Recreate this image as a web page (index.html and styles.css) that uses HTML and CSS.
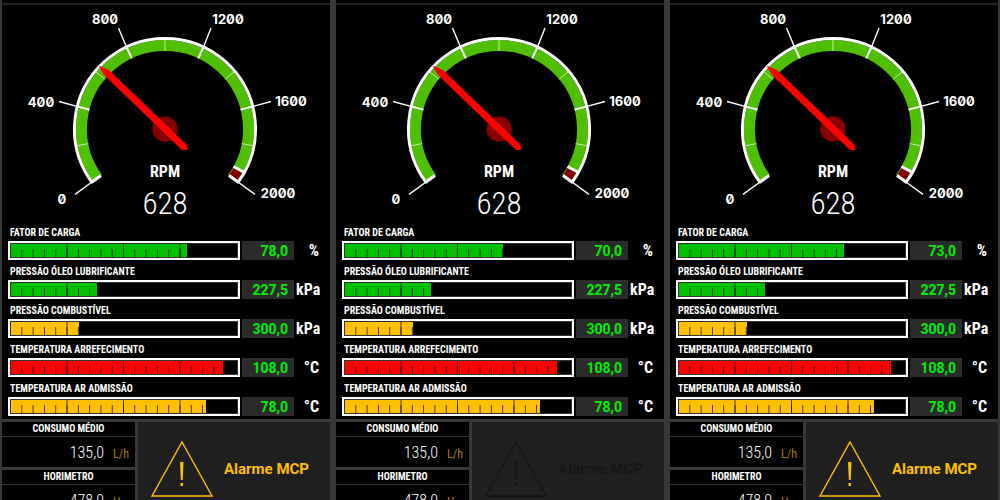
FILE: index.html
```html
<!DOCTYPE html>
<html lang="pt-BR">
<head>
<meta charset="utf-8">
<title>Motores</title>
<link rel="stylesheet" href="styles.css">
</head>
<body>
<svg class="defs" aria-hidden="true">
  <symbol id="dial" viewBox="0 0 328 217">
    <g transform="translate(163 124)" fill="none">
      <path d="M-67.6 49.1A83.5 83.5 0 1 1 67.6 49.1" stroke="#4fbf00" stroke-width="11"/>
      <path d="M73.4 40.3A83.7 83.7 0 0 1 68.4 48.3" stroke="#850000" stroke-width="10"/>
      <path d="M-73.2 53.2A90.5 90.5 0 1 1 73.2 53.2" stroke="#fff" stroke-width="3"/>
      <path d="M-64 46.5L-74 53.8M64 46.5L74 53.8M68.5 37.5L79 43.2" stroke="#fff" stroke-width="3"/>
      <path d="M-75.5-19.4L-88-22.6M-33.2-70.6L-38.5-82M33.2-70.6L38.5-82M75.5-19.4L88-22.6" stroke="#fff" stroke-width="2"/>
      <path d="M-76.6 14.6L-88 16.8M-60.1-49.7L-69-57M0-78V-90M60.1-49.7L69-57M76.6 14.6L88 16.8" stroke="#fff" stroke-opacity=".65" stroke-width="1"/>
      <path d="M-73 53L-90 65.4M-88-22.6L-106-27.5M-38.5-82L-46.500-101M38.5-82L46-101M88-22.6L106-27.5M73 53L90 65.4" stroke="#fff" stroke-width="1.4"/>
      <circle r="12.7" fill="#850000"/>
      <path d="M-65.500-62.500L-56-58.500L21.500 16L22 20.500L17 20.500L-60.500-54Z" fill="#f00" stroke="#f00" stroke-linejoin="round"/>
    </g>
  </symbol>
  <symbol id="warning" viewBox="0 0 64 58">
    <path d="M32 2L62 56H2Z" fill="none" stroke="currentColor" stroke-width="1.400"/>
    <path d="M30 22H33.500L32.700 40H30.800ZM30.500 43H33V46H30.500Z" fill="currentColor"/>
  </symbol>
</svg>
<main class="engines">
  <section class="engine">
    <svg class="gauge" viewBox="0 0 328 217">
      <use href="#dial"/>
      <text class="scale" x="60" y="199" text-anchor="middle">0</text>
      <text class="scale" x="39" y="102" text-anchor="middle">400</text>
      <text class="scale" x="103" y="19" text-anchor="middle">800</text>
      <text class="scale" x="226" y="19" text-anchor="middle">1200</text>
      <text class="scale" x="289" y="101" text-anchor="middle">1600</text>
      <text class="scale" x="276" y="193" text-anchor="middle">2000</text>
      <text class="name" x="163" y="172" text-anchor="middle">RPM</text>
      <text class="speed" x="163" y="209" text-anchor="middle">628</text>
    </svg>
    <div class="readings">
      <div class="reading"><span class="label">FATOR DE CARGA</span><div class="bar green"><i class="fill" style="width:78%"></i></div><span class="value">78,0</span><span class="unit">%</span></div>
      <div class="reading"><span class="label">PRESSÃO ÓLEO LUBRIFICANTE</span><div class="bar green"><i class="fill" style="width:38%"></i></div><span class="value">227,5</span><span class="unit">kPa</span></div>
      <div class="reading"><span class="label">PRESSÃO COMBUSTÍVEL</span><div class="bar amber"><i class="fill" style="width:30%"></i></div><span class="value">300,0</span><span class="unit">kPa</span></div>
      <div class="reading"><span class="label">TEMPERATURA ARREFECIMENTO</span><div class="bar red"><i class="fill" style="width:94%"></i></div><span class="value">108,0</span><span class="unit">°C</span></div>
      <div class="reading"><span class="label">TEMPERATURA AR ADMISSÃO</span><div class="bar amber"><i class="fill" style="width:86.5%"></i></div><span class="value">78,0</span><span class="unit">°C</span></div>
    </div>
    <div class="footer">
      <div class="counters">
        <div class="counter"><h3>CONSUMO MÉDIO</h3><p><span>135,0</span><small>L/h</small></p></div>
        <div class="counter"><h3>HORIMETRO</h3><p><span>478,0</span><small>H</small></p></div>
      </div>
      <div class="alarm"><svg class="sign" viewBox="0 0 64 58"><use href="#warning"/></svg><span>Alarme MCP</span></div>
    </div>
  </section>
  <section class="engine">
    <svg class="gauge" viewBox="0 0 328 217">
      <use href="#dial"/>
      <text class="scale" x="60" y="199" text-anchor="middle">0</text>
      <text class="scale" x="39" y="102" text-anchor="middle">400</text>
      <text class="scale" x="103" y="19" text-anchor="middle">800</text>
      <text class="scale" x="226" y="19" text-anchor="middle">1200</text>
      <text class="scale" x="289" y="101" text-anchor="middle">1600</text>
      <text class="scale" x="276" y="193" text-anchor="middle">2000</text>
      <text class="name" x="163" y="172" text-anchor="middle">RPM</text>
      <text class="speed" x="163" y="209" text-anchor="middle">628</text>
    </svg>
    <div class="readings">
      <div class="reading"><span class="label">FATOR DE CARGA</span><div class="bar green"><i class="fill" style="width:70%"></i></div><span class="value">70,0</span><span class="unit">%</span></div>
      <div class="reading"><span class="label">PRESSÃO ÓLEO LUBRIFICANTE</span><div class="bar green"><i class="fill" style="width:38%"></i></div><span class="value">227,5</span><span class="unit">kPa</span></div>
      <div class="reading"><span class="label">PRESSÃO COMBUSTÍVEL</span><div class="bar amber"><i class="fill" style="width:30%"></i></div><span class="value">300,0</span><span class="unit">kPa</span></div>
      <div class="reading"><span class="label">TEMPERATURA ARREFECIMENTO</span><div class="bar red"><i class="fill" style="width:94%"></i></div><span class="value">108,0</span><span class="unit">°C</span></div>
      <div class="reading"><span class="label">TEMPERATURA AR ADMISSÃO</span><div class="bar amber"><i class="fill" style="width:86.5%"></i></div><span class="value">78,0</span><span class="unit">°C</span></div>
    </div>
    <div class="footer">
      <div class="counters">
        <div class="counter"><h3>CONSUMO MÉDIO</h3><p><span>135,0</span><small>L/h</small></p></div>
        <div class="counter"><h3>HORIMETRO</h3><p><span>478,0</span><small>H</small></p></div>
      </div>
      <div class="alarm off"><svg class="sign" viewBox="0 0 64 58"><use href="#warning"/></svg><span>Alarme MCP</span></div>
    </div>
  </section>
  <section class="engine">
    <svg class="gauge" viewBox="0 0 328 217">
      <use href="#dial"/>
      <text class="scale" x="60" y="199" text-anchor="middle">0</text>
      <text class="scale" x="39" y="102" text-anchor="middle">400</text>
      <text class="scale" x="103" y="19" text-anchor="middle">800</text>
      <text class="scale" x="226" y="19" text-anchor="middle">1200</text>
      <text class="scale" x="289" y="101" text-anchor="middle">1600</text>
      <text class="scale" x="276" y="193" text-anchor="middle">2000</text>
      <text class="name" x="163" y="172" text-anchor="middle">RPM</text>
      <text class="speed" x="163" y="209" text-anchor="middle">628</text>
    </svg>
    <div class="readings">
      <div class="reading"><span class="label">FATOR DE CARGA</span><div class="bar green"><i class="fill" style="width:73%"></i></div><span class="value">73,0</span><span class="unit">%</span></div>
      <div class="reading"><span class="label">PRESSÃO ÓLEO LUBRIFICANTE</span><div class="bar green"><i class="fill" style="width:38%"></i></div><span class="value">227,5</span><span class="unit">kPa</span></div>
      <div class="reading"><span class="label">PRESSÃO COMBUSTÍVEL</span><div class="bar amber"><i class="fill" style="width:30%"></i></div><span class="value">300,0</span><span class="unit">kPa</span></div>
      <div class="reading"><span class="label">TEMPERATURA ARREFECIMENTO</span><div class="bar red"><i class="fill" style="width:94%"></i></div><span class="value">108,0</span><span class="unit">°C</span></div>
      <div class="reading"><span class="label">TEMPERATURA AR ADMISSÃO</span><div class="bar amber"><i class="fill" style="width:86.5%"></i></div><span class="value">78,0</span><span class="unit">°C</span></div>
    </div>
    <div class="footer">
      <div class="counters">
        <div class="counter"><h3>CONSUMO MÉDIO</h3><p><span>135,0</span><small>L/h</small></p></div>
        <div class="counter"><h3>HORIMETRO</h3><p><span>478,0</span><small>H</small></p></div>
      </div>
      <div class="alarm"><svg class="sign" viewBox="0 0 64 58"><use href="#warning"/></svg><span>Alarme MCP</span></div>
    </div>
  </section>
</main>
</body>
</html>
```
FILE: styles.css
```css
* { box-sizing: border-box; }

body {
  margin: 0;
  height: 100vh;
  overflow: hidden;
  background: #383838;
  color: #fff;
  font-family: "Roboto Condensed", "Liberation Sans Narrow", Roboto, sans-serif;
}

.defs { display: none; }

.engines {
  display: grid;
  grid-template-columns: repeat(3, 1fr);
  gap: 6px;
  padding: 0 2px;
}

.engine {
  border-top: 3px solid #000;
}

.gauge {
  display: block;
  width: 100%;
  background: #000;
  border-top: 2px solid #222;
  fill: #fff;
}

.scale {
  font: 700 13px Inter, sans-serif;
  font-variant-numeric: slashed-zero;
}

.name { font-size: 16px; font-weight: 700; }
.speed { font-size: 31px; font-weight: 300; }

.readings {
  background: #000;
  padding: 0 11px 2px 6px;
}

.reading {
  display: grid;
  grid-template-columns: 1fr 52px 23px;
  grid-template-rows: 19px 19px;
  column-gap: 2px;
  padding-bottom: 1px;
}

.label {
  grid-column: 1 / -1;
  padding-left: 2px;
  font-size: 10px;
  font-weight: 700;
  line-height: 21px;
}

.bar {
  display: grid;
  border: 2px solid #fff;
  padding: 1px;
  background: #000;
  box-shadow: inset 0 0 0 1px #333;
}

.bar::after {
  content: "";
  grid-area: 1 / 1;
  background:
    linear-gradient(to left, rgba(0, 0, 0, .7) 1px, transparent 1px) 0 0 / 25% 100% repeat-x,
    linear-gradient(to left, rgba(0, 0, 0, .7) 1px, transparent 1px) 0 100% / 5% 8px repeat-x;
}

.fill { grid-area: 1 / 1; }
.green .fill { background: #00c000; }
.amber .fill { background: #ffc000; }
.red .fill { background: #f00; }

.value {
  padding-right: 6px;
  background: #2b2b2b;
  color: #00f000;
  font: 700 14px/20px Roboto, sans-serif;
  text-align: right;
}

.unit {
  font-size: 16px;
  font-weight: 700;
  line-height: 19px;
  text-align: right;
}

.footer {
  display: grid;
  grid-template-columns: 133px 1fr;
  gap: 3px;
  padding-top: 3px;
}

.counters { display: grid; gap: 3px; }
.counter { background: #000; }

.counter h3 {
  margin: 0;
  border-bottom: 1px solid #333;
  font-size: 10px;
  line-height: 14px;
  text-align: center;
}

.counter p {
  display: grid;
  grid-template-columns: 102px 1fr;
  align-items: baseline;
  column-gap: 9px;
  margin: 0;
  padding-top: 2px;
  font-size: 16px;
  font-weight: 300;
  line-height: 28px;
}

.counter span { text-align: right; }
.counter small { color: #a87e00; font-size: 12px; font-weight: 400; line-height: 16px; }

.alarm {
  display: flex;
  align-items: center;
  gap: 10px;
  padding: 0 12px;
  background: #1f1f1f;
  color: #ffc000;
  font: 700 15px Roboto, sans-serif;
}

.alarm.off { color: #161616; }
.sign { width: 64px; height: 58px; }
```
